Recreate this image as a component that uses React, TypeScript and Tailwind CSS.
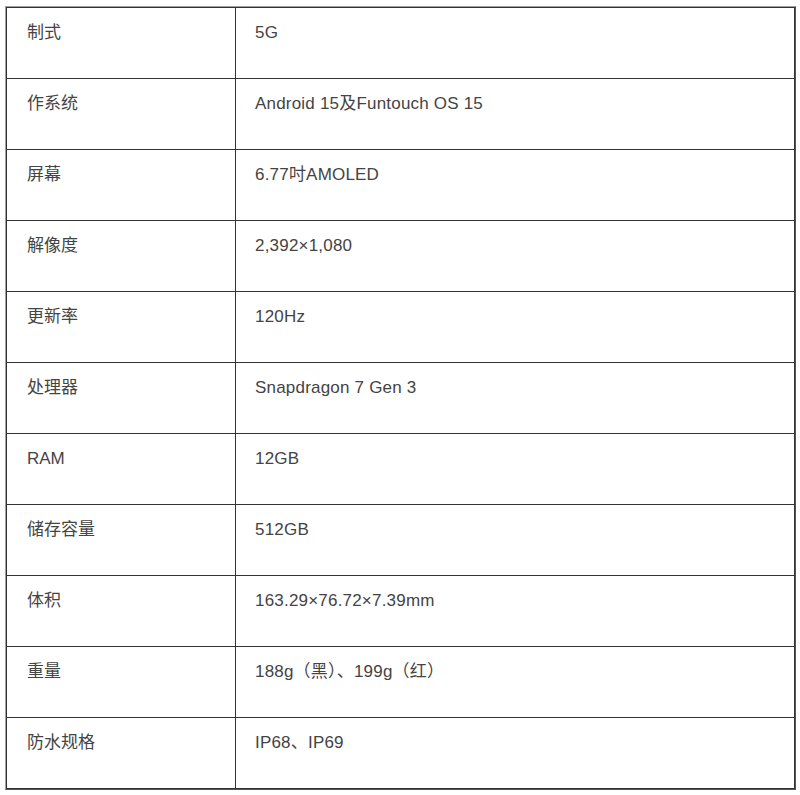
const ROWS: [string, string][] = [
  ['制式', '5G'],
  ['作系统', 'Android 15及Funtouch OS 15'],
  ['屏幕', '6.77吋AMOLED'],
  ['解像度', '2,392×1,080'],
  ['更新率', '120Hz'],
  ['处理器', 'Snapdragon 7 Gen 3'],
  ['RAM', '12GB'],
  ['储存容量', '512GB'],
  ['体积', '163.29×76.72×7.39mm'],
  ['重量', '188g（黑）、199g（红）'],
  ['防水规格', 'IP68、IP69'],
];

export default function App() {
  return (
    <div
      className="min-h-[795px] bg-white pl-[5px] pt-[6px]"
      style={{ fontFamily: '"Liberation Sans", Arial, "Noto Sans CJK SC", sans-serif' }}
    >
      <div className="w-[791px] border border-t-[#a0a0a0] border-l-[#a0a0a0] border-r-[#555] border-b-[#555]">
        <table className="w-full border-collapse table-fixed text-[17px] leading-6 text-[#444]">
          <colgroup>
            <col className="w-[229px]" />
            <col />
          </colgroup>
          <tbody>
            {ROWS.map(([k, v]) => (
              <tr key={k} className="h-[71px]">
                <td className="border border-[#333] align-top pl-5 pt-[13px]">{k}</td>
                <td className="border border-[#333] align-top pl-[19px] pt-[13px] tracking-[0.2px]">{v}</td>
              </tr>
            ))}
          </tbody>
        </table>
      </div>
    </div>
  );
}
